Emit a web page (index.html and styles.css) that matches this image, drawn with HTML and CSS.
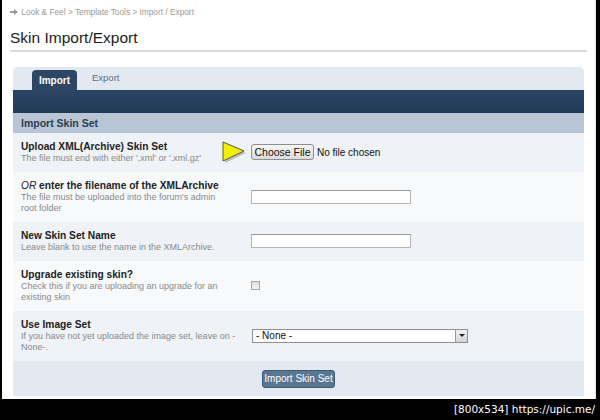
FILE: index.html
```html
<!DOCTYPE html>
<html lang="en">
<head>
    <meta charset="UTF-8" />
    <meta name="viewport" content="width=device-width, initial-scale=1.0" />
    <title>Skin Import/Export</title>
    <link rel="stylesheet" href="styles.css">
</head>
<body>
    <div class="screen">
        <div class="crumbs">
            <svg class="crumb-arrow" width="8" height="6" viewBox="0 0 8 6"><path d="M0 2h4V0l4 3-4 3V4H0z" fill="#9a9a9a"/></svg>
            Look &amp; Feel &gt; Template Tools &gt; Import / Export
        </div>
        <h1 class="page-title">Skin Import/Export</h1>

        <div class="panel">
            <ul class="tabs">
                <li class="tab active">Import</li>
                <li class="tab">Export</li>
            </ul>
            <div class="tab-bar"></div>
            <h2 class="section-head">Import Skin Set</h2>

            <div class="form-row">
                <div class="field-info">
                    <strong>Upload XML(Archive) Skin Set</strong>
                    <span>The file must end with either '.xml' or '.xml.gz'</span>
                </div>
                <div class="field-ctrl">
                    <span class="file-btn">Choose File</span>
                    <span class="file-name">No file chosen</span>
                </div>
                <!-- pointer next to the upload field -->
                <svg class="hint-arrow" width="28" height="26" viewBox="0 0 28 26">
                    <polygon points="4,4 25,13 4,23" fill="#8a8a8a" opacity="0.5"/>
                    <polygon points="2,2 23,11 2,21" fill="#f4ee00" stroke="#5a5a3a" stroke-width="1"/>
                </svg>
            </div>

            <div class="form-row light">
                <div class="field-info">
                    <strong><em>OR</em> enter the filename of the XMLArchive</strong>
                    <span>The file must be uploaded into the forum's admin<br>root folder</span>
                </div>
                <div class="field-ctrl">
                    <span class="text-input"></span>
                </div>
            </div>

            <div class="form-row">
                <div class="field-info">
                    <strong>New Skin Set Name</strong>
                    <span>Leave blank to use the name in the XMLArchive.</span>
                </div>
                <div class="field-ctrl">
                    <span class="text-input"></span>
                </div>
            </div>

            <div class="form-row light">
                <div class="field-info">
                    <strong>Upgrade existing skin?</strong>
                    <span>Check this if you are uploading an upgrade for an existing skin</span>
                </div>
                <div class="field-ctrl">
                    <span class="check"></span>
                </div>
            </div>

            <div class="form-row">
                <div class="field-info">
                    <strong>Use Image Set</strong>
                    <span>If you have not yet uploaded the image set, leave on -None-.</span>
                </div>
                <div class="field-ctrl">
                    <span class="select-box">
                        <span class="select-text">- None -</span>
                        <span class="select-arrow"></span>
                    </span>
                </div>
            </div>

            <div class="form-foot">
                <span class="submit-btn">Import Skin Set</span>
            </div>
        </div>
    </div>
    <div class="stamp">[800x534] https://upic.me/</div>
</body>
</html>
```

FILE: styles.css
```css
* {
    margin: 0;
    padding: 0;
    box-sizing: border-box;
}

body {
    font-family: "Liberation Sans", Arial, sans-serif;
    background-color: #000;
    width: 600px;
    height: 420px;
    overflow: hidden;
}

.screen {
    margin-left: 2px;
    width: 594px;
    height: 399px;
    background-color: #fff;
    padding: 0 8px;
    border-right: 1px solid #e6e6e6;
}

.crumbs {
    height: 24px;
    padding-top: 7px;
    font-size: 8.3px;
    color: #9a9a9a;
}

.crumb-arrow {
    vertical-align: 0;
    margin-right: 1px;
}

.page-title {
    margin-top: 4px;
    font-size: 15.5px;
    font-weight: normal;
    line-height: 20px;
    color: #1c1c1c;
    padding-bottom: 2px;
    border-bottom: 2px solid #dadada;
}

.panel {
    margin: 15px 3px 0;
}

.tabs {
    list-style: none;
    display: flex;
    align-items: flex-end;
    height: 23px;
    padding-left: 19px;
    background-color: #e3e9f1;
    border-radius: 5px 5px 0 0;
}

.tab {
    height: 20px;
    padding: 0 8px;
    font-size: 9.5px;
    line-height: 16px;
    color: #56718c;
}

.tab.active {
    width: 45px;
    padding: 0;
    text-align: center;
    line-height: 22px;
    font-size: 10px;
    font-weight: bold;
    color: #fff;
    background-color: #2c4663;
    border-radius: 4px 4px 0 0;
    margin-right: 7px;
}

.tab-bar {
    height: 23px;
    background: linear-gradient(#2b4664, #213a56);
}

.section-head {
    height: 20px;
    padding-left: 8px;
    font-size: 10.5px;
    line-height: 20px;
    font-weight: bold;
    color: #2c3d4f;
    background-color: #b7c5d5;
}

.form-row {
    position: relative;
    display: grid;
    grid-template-columns: 230px 1fr;
    align-items: center;
    padding: 7px 0 8px 8px;
    background-color: #eff2f6;
}

.form-row.light {
    background-color: #f7f9fb;
}

.field-info {
    padding-right: 14px;
}

.field-info strong {
    display: block;
    font-size: 10.2px;
    line-height: 13px;
    color: #222;
}

.field-info strong em {
    font-weight: normal;
}

.field-info span {
    display: block;
    font-size: 9px;
    line-height: 11px;
    color: #8a8a8a;
}

.field-ctrl {
    display: flex;
    align-items: center;
}

.hint-arrow {
    position: absolute;
    left: 208px;
    top: 7px;
}

.file-btn {
    width: 63px;
    height: 16px;
    font-size: 10.5px;
    line-height: 14px;
    text-align: center;
    color: #111;
    background: linear-gradient(#f6f6f6, #dcdcdc);
    border: 1px solid #8e8e8e;
    border-radius: 3px;
}

.file-name {
    margin-left: 3px;
    font-size: 10px;
    color: #111;
}

.text-input {
    width: 160px;
    height: 14px;
    background-color: #fff;
    border: 1px solid #b5b5b5;
    border-top-color: #9a9a9a;
}

.check {
    width: 9px;
    height: 9px;
    border: 1px solid #a8a8a8;
    background: linear-gradient(#dedede, #f6f6f6);
}

.select-box {
    display: flex;
    align-items: center;
    justify-content: space-between;
    width: 216px;
    height: 14px;
    margin-left: 1px;
    padding-left: 3px;
    background-color: #fff;
    border: 1px solid #8f8f8f;
}

.select-text {
    font-size: 10px;
    color: #111;
}

.select-arrow {
    position: relative;
    width: 12px;
    height: 12px;
    background: linear-gradient(#f2f2f2, #d4d4d4);
    border-left: 1px solid #9a9a9a;
}

.select-arrow::after {
    content: "";
    position: absolute;
    left: 3px;
    top: 4px;
    border-left: 3px solid transparent;
    border-right: 3px solid transparent;
    border-top: 3px solid #222;
}

.form-foot {
    display: flex;
    justify-content: center;
    align-items: center;
    height: 35px;
    background-color: #e3e9f1;
}

.submit-btn {
    width: 73px;
    height: 18px;
    font-size: 10px;
    line-height: 16px;
    text-align: center;
    color: #fff;
    background-color: #5a7691;
    border: 1px solid #3d5a76;
    border-radius: 3px;
}

.stamp {
    height: 21px;
    padding-right: 5px;
    text-align: right;
    font-family: "DejaVu Sans", sans-serif;
    font-size: 10.5px;
    line-height: 20px;
    color: #fff;
}
```
